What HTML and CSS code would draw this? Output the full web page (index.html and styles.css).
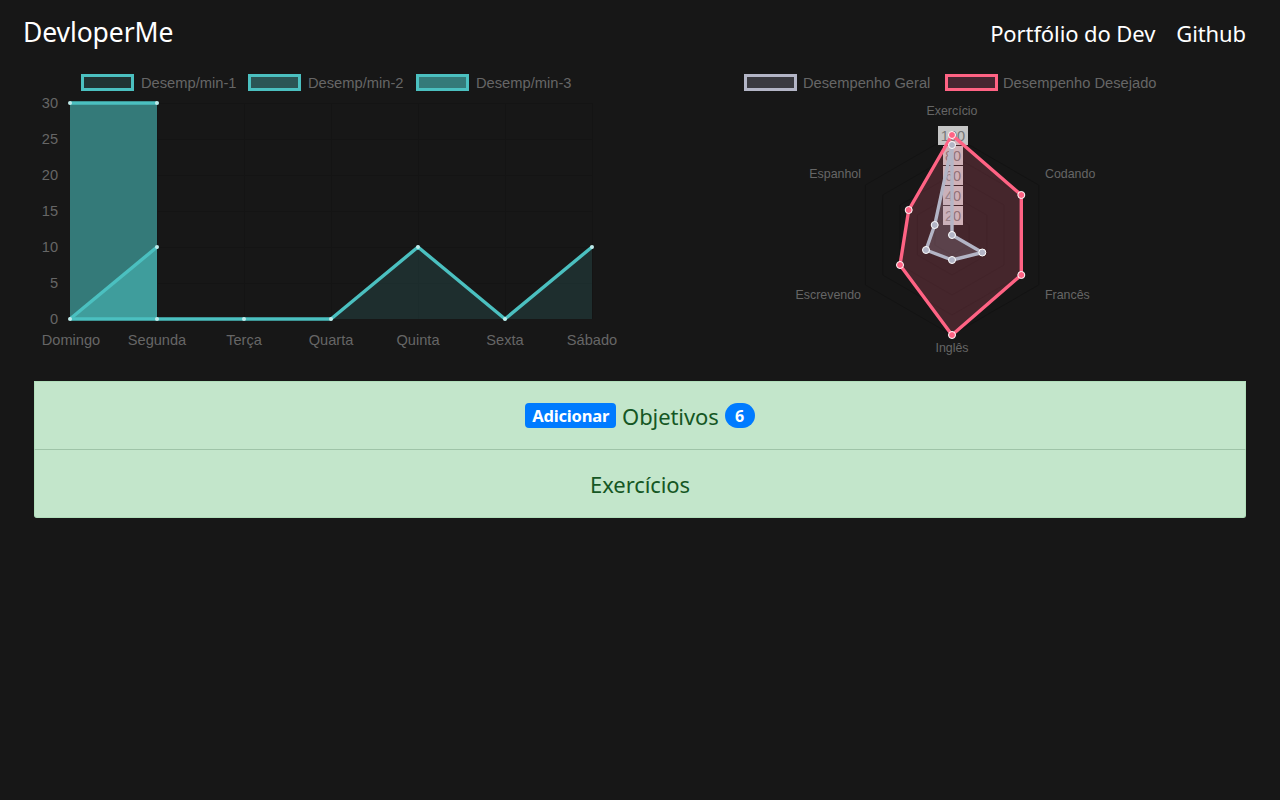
FILE: index.html
```html
<!DOCTYPE html>
<html lang="pt">
<head>
<meta charset="utf-8">
<title>DevloperMe</title>
<link rel="stylesheet" href="styles.css">
</head>
<body>
<header class="topbar">
  <div class="brand">DevloperMe</div>
  <nav class="nav">
    <a class="nav-link" href="#">Portfólio do Dev</a>
    <a class="nav-link" href="#">Github</a>
  </nav>
</header>

<section class="charts">
  <div class="chart">
    <svg class="chart-svg" width="586" height="300" viewBox="0 0 586 300">
      <!-- legend -->
      <g class="legend">
        <rect x="48.5" y="10.5" width="50" height="14" fill="#213333" stroke="#4bc0c0" stroke-width="3"/>
        <text x="107" y="23">Desemp/min-1</text>
        <rect x="215.5" y="10.5" width="50" height="14" fill="#2b5555" stroke="#4bc0c0" stroke-width="3"/>
        <text x="274" y="23">Desemp/min-2</text>
        <rect x="383.5" y="10.5" width="50" height="14" fill="#347a79" stroke="#4bc0c0" stroke-width="3"/>
        <text x="442" y="23">Desemp/min-3</text>
      </g>
      <!-- grid -->
      <g stroke="#141414" stroke-width="1">
        <line x1="36" y1="38.5" x2="558" y2="38.5"/>
        <line x1="36" y1="74.5" x2="558" y2="74.5"/>
        <line x1="36" y1="110.5" x2="558" y2="110.5"/>
        <line x1="36" y1="146.5" x2="558" y2="146.5"/>
        <line x1="36" y1="182.5" x2="558" y2="182.5"/>
        <line x1="36" y1="218.5" x2="558" y2="218.5"/>
        <line x1="36.5" y1="38" x2="36.5" y2="254"/>
        <line x1="123.5" y1="38" x2="123.5" y2="254"/>
        <line x1="210.5" y1="38" x2="210.5" y2="254"/>
        <line x1="297.5" y1="38" x2="297.5" y2="254"/>
        <line x1="384.5" y1="38" x2="384.5" y2="254"/>
        <line x1="471.5" y1="38" x2="471.5" y2="254"/>
        <line x1="558.5" y1="38" x2="558.5" y2="254"/>
      </g>
      <!-- y ticks -->
      <g class="tick" text-anchor="end">
        <text x="24" y="43">30</text>
        <text x="24" y="79">25</text>
        <text x="24" y="115">20</text>
        <text x="24" y="151">15</text>
        <text x="24" y="187">10</text>
        <text x="24" y="223">5</text>
        <text x="24" y="259">0</text>
      </g>
      <!-- x labels -->
      <g class="tick" text-anchor="middle">
        <text x="37" y="280">Domingo</text>
        <text x="123" y="280">Segunda</text>
        <text x="210" y="280">Terça</text>
        <text x="297" y="280">Quarta</text>
        <text x="384" y="280">Quinta</text>
        <text x="471" y="280">Sexta</text>
        <text x="558" y="280">Sábado</text>
      </g>
      <!-- dataset 1 -->
      <polygon points="36,254 297,254 384,182 471,254 558,182 558,254" fill="rgba(75,192,192,0.14)"/>
      <!-- dataset 3 -->
      <polygon points="36,38 123,38 123,254 36,254" fill="#347a79"/>
      <!-- dataset 2 -->
      <polygon points="36,254 123,182 123,254" fill="#3f9d9c"/>
      <g fill="none" stroke="#4bc0c0" stroke-width="3.4" stroke-linejoin="round">
        <polyline points="36,38 123,38"/>
        <polyline points="36,254 123,182"/>
        <polyline points="36,254 123,254 210,254 297,254 384,182 471,254 558,182"/>
      </g>
      <g fill="#bfeaea">
        <circle cx="36" cy="38" r="2"/>
        <circle cx="123" cy="38" r="2"/>
        <circle cx="36" cy="254" r="2"/>
        <circle cx="123" cy="182" r="2"/>
        <circle cx="123" cy="254" r="2"/>
        <circle cx="210" cy="254" r="2"/>
        <circle cx="297" cy="254" r="2"/>
        <circle cx="384" cy="182" r="2"/>
        <circle cx="471" cy="254" r="2"/>
        <circle cx="558" cy="182" r="2"/>
      </g>
    </svg>
  </div>

  <div class="chart">
    <svg class="chart-svg" width="586" height="300" viewBox="0 0 586 300">
      <g class="legend">
        <rect x="85.5" y="10.5" width="50" height="14" fill="#3a3a40" stroke="#b3b5c6" stroke-width="3"/>
        <text x="143" y="23">Desempenho Geral</text>
        <rect x="286.5" y="10.5" width="50" height="14" fill="#452631" stroke="#ff6384" stroke-width="3"/>
        <text x="343" y="23">Desempenho Desejado</text>
      </g>
      <!-- radar grid -->
      <g fill="none" stroke="#131313" stroke-width="1">
        <polygon points="292,70 378.6,120 378.6,220 292,270 205.4,220 205.4,120"/>
        <polygon points="292,90 361.3,130 361.3,210 292,250 222.7,210 222.7,130"/>
        <polygon points="292,110 344,140 344,200 292,230 240,200 240,140"/>
        <polygon points="292,130 326.6,150 326.6,190 292,210 257.4,190 257.4,150"/>
        <polygon points="292,150 309.3,160 309.3,180 292,190 274.7,180 274.7,160"/>
      </g>
      <!-- tick backdrops -->
      <g fill="#c5c5c5">
        <rect x="278" y="61" width="30" height="19"/>
        <rect x="283" y="81" width="20" height="19"/>
        <rect x="283" y="101" width="20" height="19"/>
        <rect x="283" y="121" width="20" height="19"/>
        <rect x="283" y="141" width="20" height="19"/>
      </g>
      <g class="rtick" text-anchor="middle">
        <text x="293" y="76">100</text>
        <text x="293" y="96">80</text>
        <text x="293" y="116">60</text>
        <text x="293" y="136">40</text>
        <text x="293" y="156">20</text>
      </g>
      <!-- point labels -->
      <g class="plabel">
        <text x="292" y="50" text-anchor="middle">Exercício</text>
        <text x="385" y="113">Codando</text>
        <text x="385" y="234">Francês</text>
        <text x="292" y="287" text-anchor="middle">Inglês</text>
        <text x="201" y="234" text-anchor="end">Escrevendo</text>
        <text x="201" y="113" text-anchor="end">Espanhol</text>
      </g>
      <!-- desired -->
      <polygon points="292,70 361.3,130 361.3,210 292,270 240,200 248.7,145" fill="rgba(255,99,132,0.2)" stroke="#ff6384" stroke-width="3.4" stroke-linejoin="round"/>
      <!-- general -->
      <polygon points="292,80 292,170 322.3,187.5 292,195 266,185 274.7,160" fill="rgba(179,181,198,0.2)" stroke="#b3b5c6" stroke-width="3.4" stroke-linejoin="round"/>
      <g fill="#ff6384" stroke="#fff" stroke-width="1">
        <circle cx="292" cy="70" r="3.5"/>
        <circle cx="361.3" cy="130" r="3.5"/>
        <circle cx="361.3" cy="210" r="3.5"/>
        <circle cx="292" cy="270" r="3.5"/>
        <circle cx="240" cy="200" r="3.5"/>
        <circle cx="248.7" cy="145" r="3.5"/>
      </g>
      <g fill="#b3b5c6" stroke="#fff" stroke-width="1">
        <circle cx="292" cy="80" r="3.5"/>
        <circle cx="292" cy="170" r="3.5"/>
        <circle cx="322.3" cy="187.5" r="3.5"/>
        <circle cx="292" cy="195" r="3.5"/>
        <circle cx="266" cy="185" r="3.5"/>
        <circle cx="274.7" cy="160" r="3.5"/>
      </g>
    </svg>
  </div>
</section>

<section class="panels">
  <div class="panel panel-first">
    <span class="badge-add">Adicionar</span>
    <span class="panel-title">Objetivos</span>
    <span class="badge-count">6</span>
  </div>
  <div class="panel panel-last">
    <span class="panel-title">Exercícios</span>
  </div>
</section>
</body>
</html>
```

FILE: styles.css
```css
html, body {
  margin: 0;
  padding: 0;
}

body {
  background: #171717;
  font-family: "Noto Sans", "Open Sans", sans-serif;
  color: #fff;
  width: 1280px;
  height: 800px;
  overflow: hidden;
}

.topbar {
  display: flex;
  justify-content: space-between;
  align-items: center;
  height: 65px;
  padding: 0 34px 0 23px;
}

.brand {
  font-size: 26.5px;
  color: #fff;
  letter-spacing: -0.1px;
  padding-bottom: 1px;
}

.nav {
  display: flex;
  gap: 21px;
}

.nav-link {
  color: #fff;
  text-decoration: none;
  font-size: 22px;
  letter-spacing: -0.1px;
}

.charts {
  display: flex;
  justify-content: space-between;
  padding: 0 34px;
  height: 300px;
}

.chart {
  width: 586px;
  height: 300px;
}

.chart-svg {
  display: block;
}

.legend text {
  font-family: "Liberation Sans", Arial, sans-serif;
  font-size: 14.7px;
  fill: #666;
}

.tick {
  font-family: "Liberation Sans", Arial, sans-serif;
  font-size: 14.6px;
  fill: #666;
}

.rtick {
  font-family: "Liberation Sans", Arial, sans-serif;
  font-size: 14.6px;
  fill: #777;
}

.plabel {
  font-family: "Liberation Sans", Arial, sans-serif;
  font-size: 12.4px;
  fill: #666;
}

.panels {
  padding: 16px 34px 0;
  display: flex;
  flex-direction: column;
}

.panel {
  background: #c3e6cb;
  color: #155724;
  height: 67px;
  display: flex;
  align-items: center;
  justify-content: center;
  gap: 6px;
  border: 1px solid #b1dfbb;
}

.panel-first {
  border-bottom: 1px solid #9fc4a8;
}

.panel-last {
  border-top: none;
  border-radius: 0 0 3px 3px;
}

.panel-title {
  font-size: 22px;
  letter-spacing: -0.1px;
}

.badge-add {
  background: #007bff;
  color: #fff;
  font-weight: 700;
  font-size: 16.5px;
  height: 25px;
  padding: 0 7px;
  border-radius: 4px;
  letter-spacing: -0.2px;
  display: inline-flex;
  align-items: center;
}

.badge-count {
  background: #007bff;
  color: #fff;
  font-weight: 700;
  font-size: 16px;
  height: 25px;
  width: 30px;
  border-radius: 13px;
  display: inline-flex;
  align-items: center;
  justify-content: center;
}
```
